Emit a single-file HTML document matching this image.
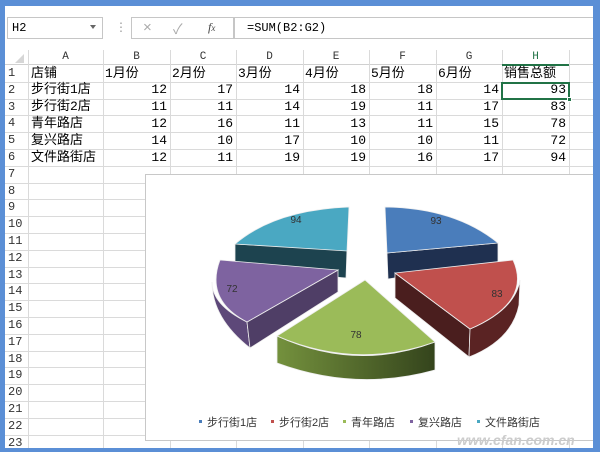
<!DOCTYPE html>
<html><head><meta charset="utf-8"><style>
*{margin:0;padding:0;box-sizing:border-box}
body{width:600px;height:452px;overflow:hidden;background:#5b8fd6;position:relative;font-family:"Liberation Sans","Noto Sans CJK SC",sans-serif}
#win{position:absolute;left:5px;top:6px;width:588px;height:442px;background:#fff;overflow:hidden}
.a{position:absolute}
.c{position:absolute;font-size:13px;line-height:16px;color:#000;white-space:nowrap;font-family:"Liberation Mono","Noto Sans CJK SC",sans-serif}
.n{text-align:right}
.hl{position:absolute;height:1px;background:#dadada;left:0;width:588px}
.vl{position:absolute;width:1px;background:#dadada;top:44px;height:400px}
.ch{position:absolute;top:45px;font-size:11px;color:#333;text-align:center;font-family:"Liberation Mono",monospace}
.rn{position:absolute;left:0;width:23px;text-align:left;padding-left:3px;font-size:12px;color:#333;font-family:"Liberation Mono",monospace}
</style></head><body>
<div id="win">
<div class="a" style="left:2px;top:11px;width:96px;height:22px;border:1px solid #c6c6c6"></div>
<div class="c" style="left:7px;top:14px;font-size:12px">H2</div>
<div class="a" style="left:85px;top:19px;border-left:3px solid transparent;border-right:3px solid transparent;border-top:4px solid #666"></div>
<div class="a" style="left:110px;top:14px;color:#999;font-size:12px">⋮</div>
<div class="a" style="left:126px;top:11px;width:104px;height:22px;border:1px solid #c6c6c6"></div>
<div class="a" style="left:138px;top:13px;color:#aaa;font-size:15px">×</div>
<div class="a" style="left:168px;top:13px;color:#aaa;font-size:14px">✓</div>
<div class="a" style="left:203px;top:14px;color:#444;font-size:12px;font-style:italic;font-family:'Liberation Serif',serif">f<span style="font-size:9px">x</span></div>
<div class="a" style="left:228px;top:11px;width:362px;height:22px;border:1px solid #c6c6c6"></div>
<div class="c" style="left:242px;top:14px;font-size:12px">=SUM(B2:G2)</div>
<div class="a" style="left:0;top:44px;width:588px;height:15px;background:#fff;border-bottom:1px solid #d0d0d0"></div>
<div class="a" style="left:10px;top:48px;border-left:9px solid transparent;border-bottom:9px solid #d6d6d6"></div>
<div class="vl" style="left:23px"></div><div class="vl" style="left:98px"></div><div class="vl" style="left:165px"></div><div class="vl" style="left:231px"></div><div class="vl" style="left:298px"></div><div class="vl" style="left:364px"></div><div class="vl" style="left:431px"></div><div class="vl" style="left:497px"></div><div class="vl" style="left:564px"></div>
<div class="ch" style="left:23px;width:75px">A</div><div class="ch" style="left:98px;width:67px">B</div><div class="ch" style="left:165px;width:66px">C</div><div class="ch" style="left:231px;width:67px">D</div><div class="ch" style="left:298px;width:66px">E</div><div class="ch" style="left:364px;width:67px">F</div><div class="ch" style="left:431px;width:66px">G</div><div class="ch" style="left:497px;width:67px;color:#217346">H</div>
<div class="a" style="left:497px;top:58px;width:67px;height:2px;background:#217346"></div>
<div id="rows"></div>
<div class="c" style="left:26px;top:60px">店铺</div><div class="c" style="left:100px;top:60px">1月份</div><div class="c" style="left:167px;top:60px">2月份</div><div class="c" style="left:233px;top:60px">3月份</div><div class="c" style="left:300px;top:60px">4月份</div><div class="c" style="left:366px;top:60px">5月份</div><div class="c" style="left:433px;top:60px">6月份</div><div class="c" style="left:499px;top:60px">销售总额</div>
<div id="data"></div>
<div class="a" style="left:496px;top:76px;width:69px;height:18px;border:2px solid #217346"></div>
<div class="a" style="left:562px;top:91px;width:5px;height:5px;background:#217346;border:1px solid #fff"></div>
<div class="a" style="left:140px;top:168px;width:450px;height:267px;background:#fff;border:1px solid #c8c8c8"></div>
<svg class="a" style="left:0;top:0" width="588" height="442" viewBox="5 6 588 442">
<defs><linearGradient id="g" x1="0" x2="1"><stop offset="0" stop-color="#74913d"/><stop offset="1" stop-color="#34441c"/></linearGradient></defs>
<g stroke="#eee" stroke-width="0.8">
<path d="M235,244 L347,250 L346,278 L235,268 Z" fill="#1d434f"/>
<path d="M347,251 L349,207 Q275,210 235,244 Z" fill="#4aa8c2"/>
<path d="M387,253 L498,243 L498,262 L388,279 Z" fill="#1f3050"/>
<path d="M387,253 L385,207 Q455,208 498,243 Z" fill="#4a7dbb"/>
<path d="M212,282 Q212,318 250,348 L247,322 Q212,305 212,282 Z" fill="#5d4879"/>
<path d="M247,322 L338,270 L338,292 L250,348 Z" fill="#4f3e66"/>
<path d="M338,270 L220,260 Q205,300 247,322 Z" fill="#7e63a0"/>
<path d="M395,273 L470,329 L469,357 L395,298 Z" fill="#4a1e1e"/>
<path d="M470,329 Q515,310 520,280 L519,305 Q512,340 469,357 Z" fill="#5a2323"/>
<path d="M395,273 L513,260 Q532,302 470,329 Z" fill="#c0504d"/>
<path d="M277,336 Q356,372 435,342 L435,370 Q356,392 277,363 Z" fill="url(#g)"/>
<path d="M365,280 L277,336 Q356,370 435,342 Z" fill="#9bbb59"/>
</g>
<g font-size="10" fill="#333" font-family="Liberation Sans,sans-serif" text-anchor="middle">
<text x="436" y="224">93</text><text x="497" y="297">83</text><text x="356" y="338">78</text><text x="232" y="292">72</text><text x="296" y="223">94</text>
</g>
<g font-size="11" fill="#333" font-family="Liberation Sans,Noto Sans CJK SC,sans-serif">
<rect x="199" y="420" width="3" height="3" fill="#4a7dbb"/><text x="207" y="426">步行街1店</text>
<rect x="271" y="420" width="3" height="3" fill="#c0504d"/><text x="279" y="426">步行街2店</text>
<rect x="343" y="420" width="3" height="3" fill="#9bbb59"/><text x="351" y="426">青年路店</text>
<rect x="410" y="420" width="3" height="3" fill="#7e63a0"/><text x="418" y="426">复兴路店</text>
<rect x="477" y="420" width="3" height="3" fill="#4aa8c2"/><text x="485" y="426">文件路街店</text>
</g>
<text x="457" y="445" font-size="14" font-style="italic" font-weight="bold" fill="#ccc" font-family="Liberation Sans,sans-serif">www.cfan.com.cn</text>
</svg>
</div>
<script>
var r=document.getElementById('rows'),h='';
for(var i=1;i<=23;i++){var t=59+(i-1)*16.8;h+='<div class="hl" style="top:'+(t+16.8).toFixed(1)+'px"></div><div class="rn" style="top:'+(t+1).toFixed(1)+'px">'+i+'</div>';}
r.innerHTML=h;
var d=[["步行街1店",12,17,14,18,18,14,93],["步行街2店",11,11,14,19,11,17,83],["青年路店",12,16,11,13,11,15,78],["复兴路店",14,10,17,10,10,11,72],["文件路街店",12,11,19,19,16,17,94]];
var L=[98,165,231,298,364,431,497],W=[67,66,67,66,67,66,67],s='';
d.forEach(function(row,k){var t=(59+(k+1)*16.8+0.5).toFixed(1);s+='<div class="c" style="left:26px;top:'+t+'px">'+row[0]+'</div>';for(var j=1;j<8;j++)s+='<div class="c n" style="left:'+L[j-1]+'px;width:'+(W[j-1]-3)+'px;top:'+t+'px">'+row[j]+'</div>';});
document.getElementById('data').innerHTML=s;
</script>
</body></html>
